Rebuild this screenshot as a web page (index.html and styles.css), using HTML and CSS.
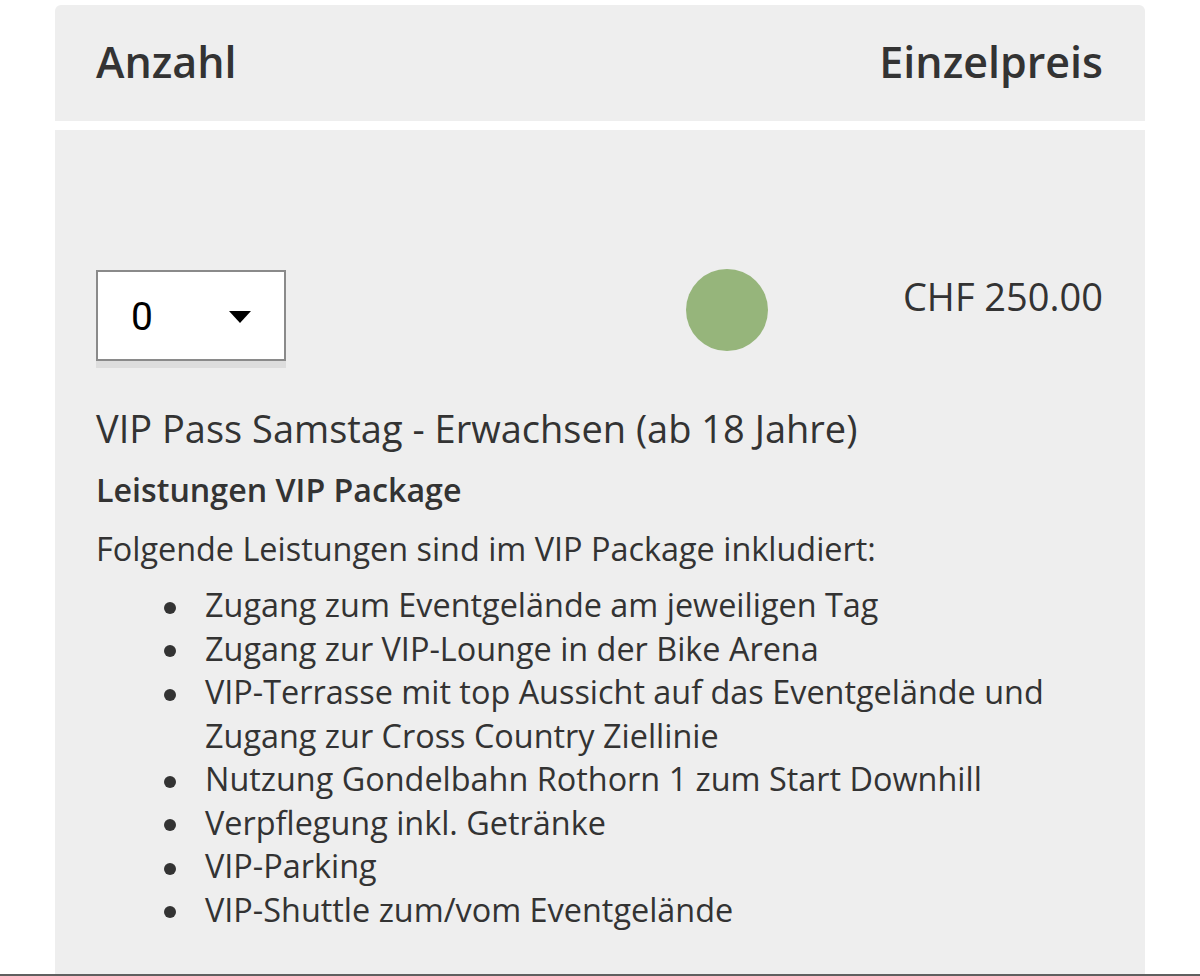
FILE: index.html
```html
<!DOCTYPE html>
<html lang="de">
<head>
<meta charset="utf-8">
<title>VIP Pass</title>
<link rel="stylesheet" href="styles.css">
</head>
<body>
<div class="page">
  <div class="table">
    <div class="head">
      <span>Anzahl</span>
      <span>Einzelpreis</span>
    </div>
    <div class="item">
      <div class="row">
        <div class="select">
          <span class="select-value">0</span>
          <span class="caret"></span>
        </div>
        <span class="status"></span>
        <span class="price">CHF 250.00</span>
      </div>
      <div class="title">VIP Pass Samstag - Erwachsen (ab 18 Jahre)</div>
      <div class="subhead">Leistungen VIP Package</div>
      <p class="intro">Folgende Leistungen sind im VIP Package inkludiert:</p>
      <ul class="list">
        <li><span>Zugang zum Eventgelände am jeweiligen Tag</span></li>
        <li><span>Zugang zur VIP-Lounge in der Bike Arena</span></li>
        <li><span>VIP-Terrasse mit top Aussicht auf das Eventgelände und Zugang zur Cross Country Ziellinie</span></li>
        <li><span>Nutzung Gondelbahn Rothorn 1 zum Start Downhill</span></li>
        <li><span>Verpflegung inkl. Getränke</span></li>
        <li><span>VIP-Parking</span></li>
        <li><span>VIP-Shuttle zum/vom Eventgelände</span></li>
      </ul>
    </div>
  </div>
  <div class="bottom-rule"></div>
</div>
</body>
</html>
```

FILE: styles.css
```css
html, body {
  margin: 0;
  padding: 0;
  background: #ffffff;
}
body {
  font-family: "Open Sans", "Noto Sans", sans-serif;
  color: #333333;
  overflow: hidden;
}
.page {
  display: flex;
  flex-direction: column;
  height: 976px;
}
.table {
  margin: 0 55px;
  padding-top: 5px;
  display: flex;
  flex-direction: column;
  gap: 9px;
}
.head {
  height: 116px;
  box-sizing: border-box;
  padding: 0 42px 3px 41px;
  background: #eeeeee;
  border-radius: 6px 6px 0 0;
  display: flex;
  justify-content: space-between;
  align-items: center;
  font-size: 43px;
  font-weight: 600;
  color: #333333;
}
.item {
  height: 844px;
  box-sizing: border-box;
  background: #eeeeee;
  padding: 140px 42px 0 41px;
}
.row {
  display: flex;
  align-items: flex-start;
}
.select {
  width: 190px;
  height: 91px;
  box-sizing: border-box;
  border: 2px solid #8a8a8a;
  background: #ffffff;
  box-shadow: 0 7px 0 #dddddd;
  display: flex;
  align-items: center;
  padding-left: 33px;
}
.select-value {
  font-family: Roboto, "Liberation Sans", sans-serif;
  font-size: 39px;
  color: #000000;
  width: 98px;
  margin-top: 2px;
}
.caret {
  width: 0;
  height: 0;
  border-left: 11px solid transparent;
  border-right: 11px solid transparent;
  border-top: 12px solid #000000;
  margin-top: 2px;
}
.status {
  width: 82px;
  height: 82px;
  border-radius: 50%;
  background: #96b57b;
  margin-left: 400px;
  margin-top: -1px;
}
.price {
  margin-left: auto;
  font-size: 38px;
  line-height: 52px;
  color: #333333;
}
.title {
  margin-top: 41px;
  font-size: 38px;
  line-height: 52px;
}
.subhead {
  margin-top: 14px;
  font-size: 32.2px;
  font-weight: 600;
  line-height: 43.5px;
}
.intro {
  margin: 15.5px 0 0;
  font-size: 32.4px;
  line-height: 43.5px;
}
.list {
  list-style: none;
  margin: 12.5px 0 0;
  padding: 0 0 0 68px;
  font-size: 32.4px;
  line-height: 43.5px;
}
.list li {
  display: flex;
  align-items: flex-start;
}
.list li::before {
  content: "";
  flex: none;
  width: 12px;
  height: 12px;
  border-radius: 50%;
  background: #333333;
  margin: 18.5px 29px 0 0;
}
.bottom-rule {
  height: 2px;
  background: #5f5f5f;
}
```
